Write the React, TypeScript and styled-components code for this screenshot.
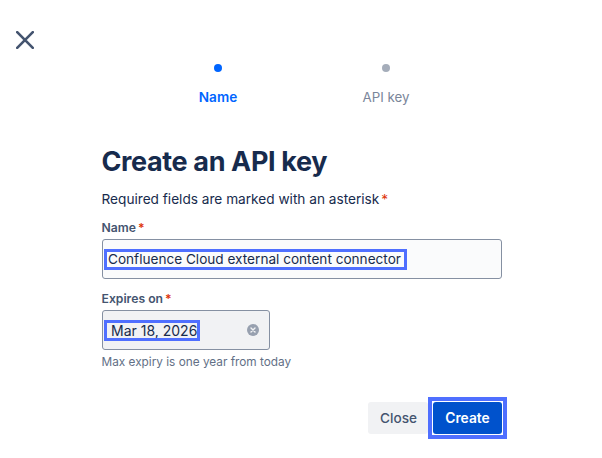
import React from "react";
import styled, { createGlobalStyle } from "styled-components";

const Global = createGlobalStyle`
  html, body { margin: 0; padding: 0; background: #fff; }
  body { font-family: Inter, "Liberation Sans", sans-serif; color: #172b4d; -webkit-font-smoothing: antialiased; }
`;

const Page = styled.div`
  width: 602px;
  height: 458px;
  overflow: hidden;
  display: flex;
  flex-direction: column;
`;

const TopBar = styled.div`
  height: 31px;
  padding: 31px 0 0 16px;
  display: flex;
`;

const CloseIcon = styled.button`
  width: 18px;
  height: 18px;
  padding: 0;
  border: 0;
  background: none;
  display: block;
  color: #44546f;
`;

const Stepper = styled.div`
  padding-left: 134px;
  display: grid;
  grid-template-columns: 168px 168px;
`;

const Step = styled.div`
  display: flex;
  flex-direction: column;
  align-items: center;
  padding-top: 2px;
`;

const Dot = styled.span<{ $active?: boolean }>`
  width: 8px;
  height: 8px;
  border-radius: 50%;
  background: ${(p) => (p.$active ? "#0065ff" : "#a5adba")};
`;

const StepLabel = styled.span<{ $active?: boolean }>`
  margin-top: 16px;
  font-size: ${(p) => (p.$active ? 13.6 : 13.3)}px;
  line-height: 18px;
  font-weight: ${(p) => (p.$active ? 600 : 400)};
  color: ${(p) => (p.$active ? "#0065ff" : "#7a869a")};
`;

const Form = styled.form`
  width: 400px;
  margin-left: 102px;
  padding-top: 38px;
  display: flex;
  flex-direction: column;
`;

const Title = styled.h1`
  margin: 0 0 0 -0.5px;
  font-size: 27px;
  line-height: 36px;
  font-weight: 700;
  letter-spacing: -0.37px;
  color: #172b4d;
`;

const Hint = styled.p`
  margin: 10px 0 0 -0.5px;
  font-size: 13.65px;
  line-height: 18px;
  color: #172b4d;
`;

const Star = styled.span`
  color: #de350b;
  margin-left: 2px;
`;

const Label = styled.label`
  margin: 12px 0 0 -0.5px;
  font-size: 12.2px;
  line-height: 16px;
  font-weight: 600;
  color: #44546f;
  display: block;
`;

const Field = styled.div<{ $width: number; $bg: string }>`
  margin-top: 3px;
  box-sizing: border-box;
  width: ${(p) => p.$width}px;
  height: 40px;
  border: 1px solid #8590a2;
  border-radius: 3px;
  background: ${(p) => p.$bg};
  display: flex;
  align-items: center;
  justify-content: space-between;
  padding: 0 10px 0 1px;
`;

const Selected = styled.span<{ $size: number; $left: number; $right: number }>`
  outline: 3px solid #4f6fff;
  outline-offset: -3px;
  padding: 2px ${(p) => p.$right}px 2px ${(p) => p.$left}px;
  font-size: ${(p) => p.$size}px;
  line-height: 17px;
  color: #172b4d;
  white-space: nowrap;
`;

const Help = styled.div`
  margin: 4px 0 0 -0.5px;
  font-size: 11.8px;
  line-height: 16px;
  color: #626f86;
`;

const Actions = styled.div`
  margin-top: 27px;
  margin-right: -5px;
  display: flex;
  justify-content: flex-end;
  align-items: center;
`;

const CloseButton = styled.button`
  width: 60px;
  height: 32px;
  padding: 0 0 0 1px;
  border: 0;
  border-radius: 3px;
  background: #f1f2f4;
  color: #44546f;
  font: 500 13.6px Inter, "Liberation Sans", sans-serif;
`;

const FocusRing = styled.div`
  border: 4px solid #4f6fff;
  padding: 1px;
  display: flex;
`;

const CreateButton = styled.button`
  width: 69px;
  height: 32px;
  padding: 0;
  border: 0;
  border-radius: 3px;
  background: #0052cc;
  color: #fff;
  font: 600 13.8px Inter, "Liberation Sans", sans-serif;
`;

export default function App() {
  return (
    <Page>
      <Global />
      <TopBar>
        <CloseIcon type="button" aria-label="Close">
          <svg width="18" height="18" viewBox="0 0 18 18" fill="none" stroke="currentColor" strokeWidth="2.6" strokeLinecap="round">
            <path d="M1.2 1.2l15.6 15.6M16.8 1.2L1.2 16.8" />
          </svg>
        </CloseIcon>
      </TopBar>
      <Stepper>
        <Step>
          <Dot $active />
          <StepLabel $active>Name</StepLabel>
        </Step>
        <Step>
          <Dot />
          <StepLabel>API key</StepLabel>
        </Step>
      </Stepper>
      <Form>
        <Title>Create an API key</Title>
        <Hint>
          Required fields are marked with an asterisk<Star>*</Star>
        </Hint>
        <Label>
          Name<Star>*</Star>
        </Label>
        <Field $width={400} $bg="#fafbfc">
          <Selected $size={13.6} $left={4} $right={6}>Confluence Cloud external content connector</Selected>
        </Field>
        <Label>
          Expires on<Star>*</Star>
        </Label>
        <Field $width={168} $bg="#f1f2f4">
          <Selected $size={14} $left={7} $right={3}>Mar 18, 2026</Selected>
          <svg width="12" height="12" viewBox="0 0 12 12">
            <circle cx="6" cy="6" r="6" fill="#97a0af" />
            <path d="M4 4l4 4M8 4l-4 4" stroke="#f1f2f4" strokeWidth="1.4" strokeLinecap="round" />
          </svg>
        </Field>
        <Help>Max expiry is one year from today</Help>
        <Actions>
          <CloseButton type="button">Close</CloseButton>
          <FocusRing>
            <CreateButton type="button">Create</CreateButton>
          </FocusRing>
        </Actions>
      </Form>
    </Page>
  );
}
